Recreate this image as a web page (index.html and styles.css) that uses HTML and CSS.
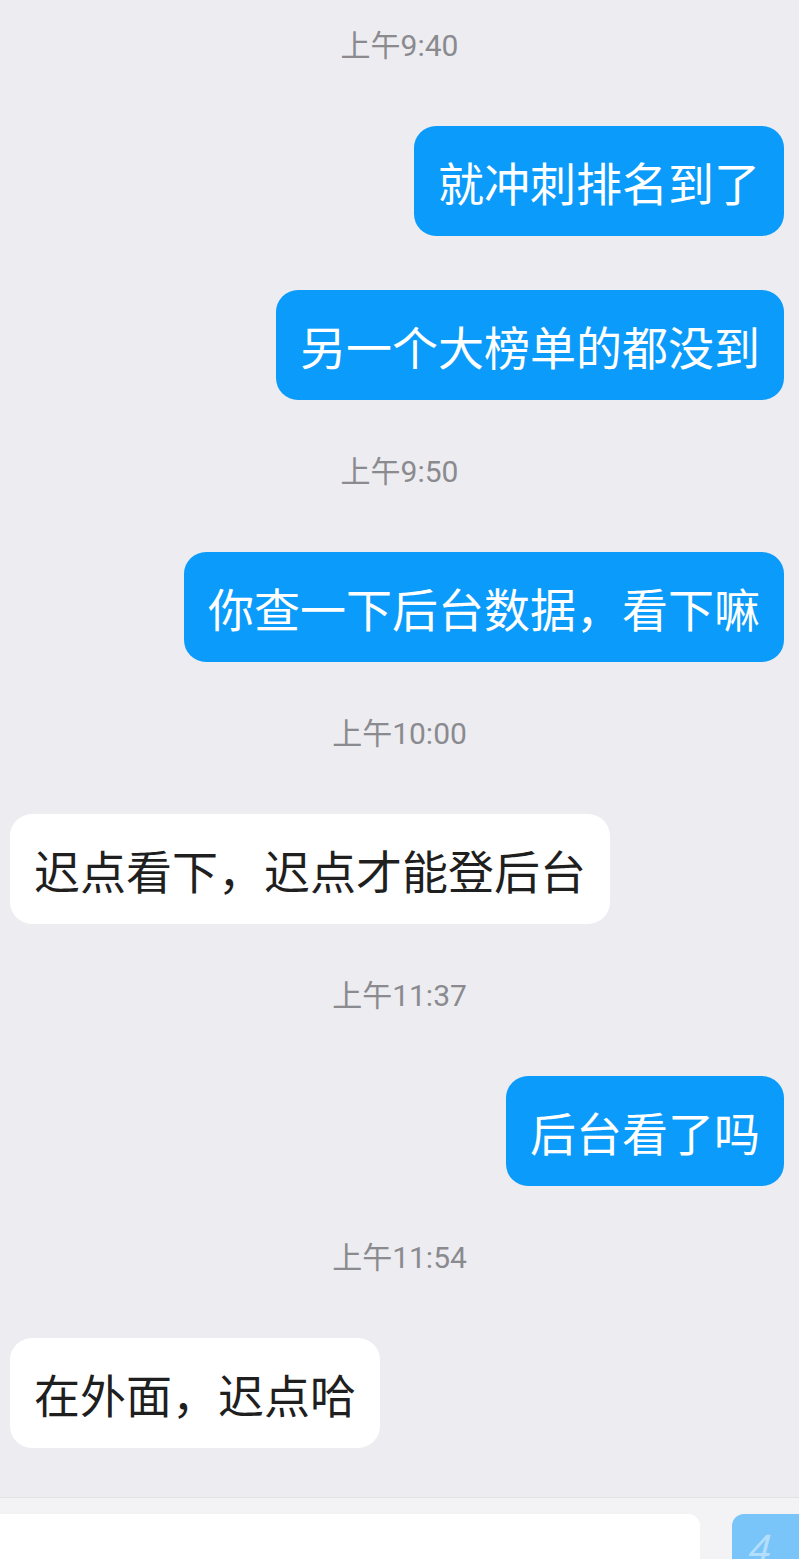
FILE: index.html
```html
<!DOCTYPE html>
<html lang="zh-CN">
<head>
  <meta charset="UTF-8">
  <meta name="viewport" content="width=device-width, initial-scale=1.0">
  <title>聊天</title>
  <link rel="stylesheet" href="styles.css">
</head>
<body>
  <div class="chat">
    <div class="time">上午9:40</div>
    <div class="bubble me">就冲刺排名到了</div>
    <div class="bubble me">另一个大榜单的都没到</div>

    <div class="time">上午9:50</div>
    <div class="bubble me">你查一下后台数据，看下嘛</div>

    <div class="time">上午10:00</div>
    <div class="bubble other">迟点看下，迟点才能登后台</div>

    <div class="time">上午11:37</div>
    <div class="bubble me">后台看了吗</div>

    <div class="time">上午11:54</div>
    <div class="bubble other">在外面，迟点哈</div>
  </div>

  <div class="input-bar">
    <div class="input"></div>
    <div class="send">4</div>
  </div>
</body>
</html>
```

FILE: styles.css
```css
* { margin: 0; padding: 0; box-sizing: border-box; font-family: 'Noto Sans CJK SC', 'Noto Sans', sans-serif; }
html, body { height: 100%; }
body { background: #ededf1; color: #1f1f1f; overflow: hidden; }
.chat { display: flex; flex-direction: column; padding-top: 26px; height: 1497px; }
.time { align-self: center; height: 40px; line-height: 40px; font-family: Roboto, 'Noto Sans CJK SC', sans-serif; font-size: 30px; color: #8a8a8f; margin-top: 52px; margin-bottom: 60px; }
.time:first-child { margin-top: 0; }
.bubble { height: 110px; line-height: 110px; padding: 0 24px; font-size: 46px; border-radius: 22px; white-space: nowrap; }
.bubble + .bubble { margin-top: 54px; }
.me { align-self: flex-end; margin-right: 15px; background: #0b9bfb; color: #fff; }
.other { align-self: flex-start; margin-left: 10px; background: #fff; color: #1f1f1f; }
.input-bar { display: flex; justify-content: space-between; border-top: 1px solid #e2e2e6; background: #f3f3f6; padding-top: 16px; height: 62px; }
.input { width: 700px; height: 46px; background: #fff; border-radius: 0 12px 0 0; }
.send { width: 67px; height: 46px; background: #79c5fa; border-radius: 12px 0 0 0; color: rgba(255,255,255,0.45); font-size: 40px; line-height: 66px; padding-left: 14px; font-style: italic; }
```
